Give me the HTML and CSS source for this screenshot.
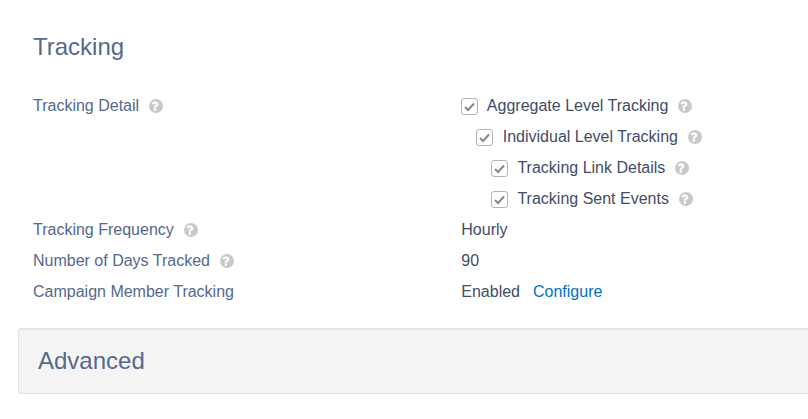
FILE: index.html
```html
<!DOCTYPE html>
<html lang="en">
<head>
    <meta charset="UTF-8">
    <meta name="viewport" content="width=device-width, initial-scale=1.0">
    <title>Tracking</title>
    <link rel="stylesheet" href="styles.css">
</head>
<body>
    <svg class="sprite" aria-hidden="true">
        <symbol id="help" viewBox="128 128 1536 1536">
            <circle cx="896" cy="896" r="768" fill="currentColor"/>
            <path fill="#fff" d="M896 1376v-192q0-14-9-23t-23-9H672q-14 0-23 9t-9 23v192q0 14 9 23t23 9h192q14 0 23-9t9-23zm256-672q0-88-55.500-163T958 425t-170-41q-243 0-371 213-15 24 8 42l132 100q7 6 19 6 16 0 25-12 53-68 86-92 34-24 86-24 48 0 85.500 26t37.500 59q0 38-20 61t-68 45q-63 28-115.500 86.500T640 1020v36q0 14 9 23t23 9h192q14 0 23-9t9-23q0-19 21.500-49.500T972 957q32-18 49-28.500t46-35 44.500-48 28-60.500 12.500-81z"/>
        </symbol>
    </svg>
    <section class="tracking">
        <h2>Tracking</h2>
        <dl class="details">
            <dt>Tracking Detail<svg class="help"><use href="#help"/></svg></dt>
            <dd>
                <div class="level1">
                    <input type="checkbox" id="aggregate" checked>
                    <label for="aggregate">Aggregate Level Tracking</label><svg class="help"><use href="#help"/></svg>
                </div>
                <div class="level2">
                    <input type="checkbox" id="individual" checked>
                    <label for="individual">Individual Level Tracking</label><svg class="help"><use href="#help"/></svg>
                </div>
                <div class="level3">
                    <input type="checkbox" id="links" checked>
                    <label for="links">Tracking Link Details</label><svg class="help"><use href="#help"/></svg>
                </div>
                <div class="level3">
                    <input type="checkbox" id="events" checked>
                    <label for="events">Tracking Sent Events</label><svg class="help"><use href="#help"/></svg>
                </div>
            </dd>
            <dt>Tracking Frequency<svg class="help"><use href="#help"/></svg></dt>
            <dd>Hourly</dd>
            <dt>Number of Days Tracked<svg class="help"><use href="#help"/></svg></dt>
            <dd>90</dd>
            <dt>Campaign Member Tracking</dt>
            <dd>Enabled<a class="configure" href="#">Configure</a></dd>
        </dl>
    </section>
    <section class="advanced">
        <h2>Advanced</h2>
    </section>
</body>
</html>
```

FILE: styles.css
```css
* {
    box-sizing: border-box;
}
body {
    margin: 0;
    padding: 32px 0 24px 18px;
    background: #fff;
    color: #3f4d66;
    font-family: "Liberation Sans", Arial, sans-serif;
    font-size: 16px;
    line-height: 31px;
}
h2 {
    margin: 0;
    color: #54698d;
    font-size: 24px;
    font-weight: normal;
    line-height: 30px;
}
.sprite {
    display: none;
}
.tracking {
    padding-left: 15px;
}
.details {
    display: grid;
    grid-template-columns: 21fr 17fr;
    margin: 28px 0 21px;
}
dt {
    color: #54698d;
}
dd {
    margin: 0;
}
.level2 {
    padding-left: 15px;
}
.level3 {
    padding-left: 30px;
}
.level1,
.level2,
.level3 {
    height: 31px;
    white-space: nowrap;
}
input[type="checkbox"] {
    appearance: none;
    width: 17px;
    height: 17px;
    margin: 0 5px 0 0;
    border: 1px solid #b4b4b4;
    border-radius: 3px;
    background: #fff url("data:image/svg+xml,%3Csvg xmlns='http://www.w3.org/2000/svg' viewBox='0 0 15 15'%3E%3Cpath d='M3 8L6 11L12 4.500' fill='none' stroke='%23888' stroke-width='2'/%3E%3C/svg%3E") center no-repeat;
    vertical-align: middle;
}
input[type="checkbox"]:not(:checked) {
    background-image: none;
}
.help {
    width: 14px;
    height: 14px;
    margin-left: 10px;
    color: #c9c9c9;
    vertical-align: -2px;
}
.configure {
    margin-left: 13px;
    color: #0070c0;
    text-decoration: none;
}
.advanced {
    padding: 17px 19px;
    border: 1px solid #dfdfdf;
    border-right: 0;
    border-radius: 4px 0 0 4px;
    background: #f4f4f4;
    box-shadow: inset 0 1px 1px rgba(0, 0, 0, 0.05);
}
```
